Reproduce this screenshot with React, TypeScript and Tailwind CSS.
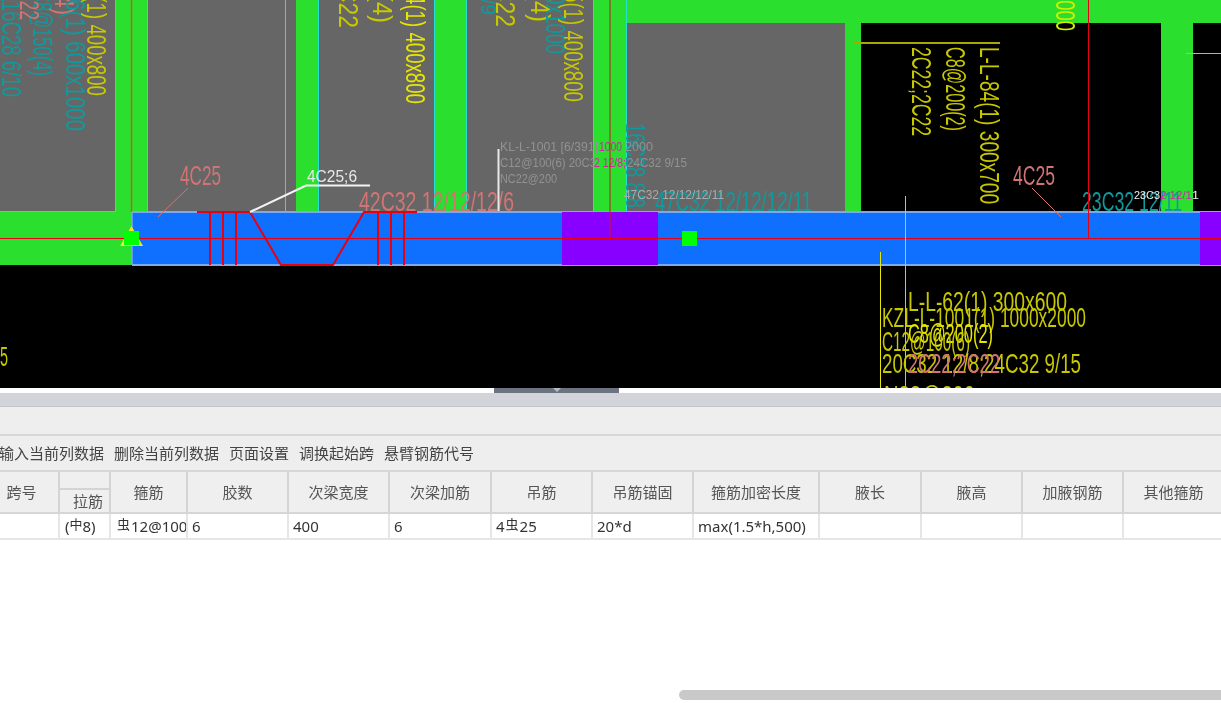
import React from "react";

const Y = "#c8c800";
const YB = "#e6e600";
const T = "#0f9a9e";
const P = "#d27474";
const M = "#d81fb0";
const G = "#929292";

type TProps = { x: number; y: number; len: number; size: number; fill: string; children: string; rot?: boolean };

// CAD annotation text. For rotated text, x is the baseline and y the top of the run.
function CadText({ x, y, len, size, fill, children, rot }: TProps) {
  return (
    <text
      x={x}
      y={y}
      fontSize={size}
      fill={fill}
      textLength={len}
      lengthAdjust="spacingAndGlyphs"
      transform={rot ? `rotate(90 ${x} ${y})` : undefined}
    >
      {children}
    </text>
  );
}

function Canvas() {
  const green = "#2adf2e";
  const gray = "#666666";
  const cyan = "#22e0d8";
  const red = "#e60012";
  return (
    <svg width="1221" height="388" viewBox="0 0 1221 388" className="block shrink-0 font-['Liberation_Sans']">
      <rect width="1221" height="388" fill="#000" />
      {/* Bays */}
      <rect x="0" y="0" width="116" height="212" fill={gray} />
      <rect x="116" y="0" width="32" height="212" fill={green} />
      <rect x="148" y="0" width="148" height="212" fill={gray} />
      <rect x="296" y="0" width="22" height="212" fill={green} />
      <rect x="318" y="0" width="116" height="212" fill={gray} />
      <rect x="434" y="0" width="33" height="212" fill={green} />
      <rect x="467" y="0" width="127" height="212" fill={gray} />
      <rect x="594" y="0" width="33" height="212" fill={green} />
      <rect x="627" y="0" width="594" height="23" fill={green} />
      <rect x="627" y="23" width="218" height="189" fill={gray} />
      <rect x="845" y="23" width="16" height="189" fill={green} />
      <rect x="1161" y="23" width="32" height="189" fill={green} />
      <rect x="0" y="212" width="132" height="53" fill={green} />
      {/* cyan edges */}
      {[115.5, 147.5, 285.5, 318.5, 434.5, 466.5, 593.5, 626.5].map((x) => (
        <line key={x} x1={x} y1="0" x2={x} y2="212" stroke={cyan} strokeWidth="1" />
      ))}
      <line x1="116" y1="211.5" x2="0" y2="211.5" stroke={cyan} strokeWidth="1" />
      <line x1="131.5" y1="0" x2="131.5" y2="212" stroke="#b5651d" strokeWidth="1.5" />

      {/* Texts over bays */}
      <CadText rot x={2} y={-8} len={105} size={27} fill={T}>{"116C28 6/10"}</CadText>
      <CadText rot x={33} y={-10} len={86} size={27} fill={T}>{"C8@150(4)"}</CadText>
      <CadText rot x={20} y={-22} len={42} size={27} fill={P}>{"2C22"}</CadText>
      <CadText rot x={55} y={-12} len={27} size={27} fill={P}>{"(4)"}</CadText>
      <CadText rot x={66} y={-12} len={143} size={27} fill={T}>{"76(1) 600x1000"}</CadText>
      <CadText rot x={87} y={-14} len={110} size={27} fill={Y}>{"4(1) 400x800"}</CadText>
      <CadText rot x={339} y={-14} len={42} size={27} fill={Y}>{"C22"}</CadText>
      <CadText rot x={373} y={-6} len={29} size={27} fill={Y}>{"(4)"}</CadText>
      <CadText rot x={406} y={-6} len={110} size={27} fill={YB}>{"4(1) 400x800"}</CadText>
      <CadText rot x={481} y={-25} len={40} size={22} fill={T}>{"C8/9"}</CadText>
      <CadText rot x={496} y={-15} len={42} size={27} fill={Y}>{"C22"}</CadText>
      <CadText rot x={531} y={-7} len={29} size={27} fill={Y}>{"(4)"}</CadText>
      <CadText rot x={546} y={-16} len={70} size={27} fill={T}>{"00x1000"}</CadText>
      <CadText rot x={564} y={-8} len={110} size={27} fill={Y}>{"5(1) 400x800"}</CadText>
      <CadText rot x={626} y={123} len={85} size={27} fill={T}>{"16C28 8/8"}</CadText>

      <CadText x={180} y={185} len={41} size={27} fill={P}>{"4C25"}</CadText>
      <CadText x={359} y={211} len={155} size={27} fill={P}>{"42C32 12/12/12/6"}</CadText>
      <CadText x={655} y={211} len={157} size={27} fill={T}>{"47C32 12/12/12/11"}</CadText>

      <line x1="498.5" y1="149" x2="498.5" y2="212" stroke="#e8e8e8" strokeWidth="2" />
      <CadText x={500} y={151} len={98} size={12} fill={G}>{"KL-L-1001 [6/391]"}</CadText>
      <CadText x={599} y={151} len={23} size={12} fill={M}>{"1000"}</CadText>
      <CadText x={625} y={151} len={28} size={12} fill={G}>{"2000"}</CadText>
      <CadText x={500} y={167} len={96} size={12} fill={G}>{"C12@100(6) 20C3"}</CadText>
      <CadText x={594} y={167} len={32} size={12} fill={M}>{"2 12/8;"}</CadText>
      <CadText x={627} y={167} len={60} size={12} fill={G}>{"24C32 9/15"}</CadText>
      <CadText x={500} y={183} len={57} size={12} fill={G}>{"NC22@200"}</CadText>
      <CadText x={624} y={199} len={100} size={12} fill="#acacac">{"47C32 12/12/12/11"}</CadText>

      {/* Right black bay */}
      <line x1="853" y1="43" x2="1000" y2="43" stroke="#a8a800" strokeWidth="2" />
      <CadText rot x={912} y={47} len={89} size={27} fill={Y}>{"2C22;2C22"}</CadText>
      <CadText rot x={946} y={47} len={84} size={27} fill={Y}>{"C8@200(2)"}</CadText>
      <CadText rot x={980} y={47} len={157} size={27} fill={Y}>{"L-L-84(1) 300x700"}</CadText>
      <CadText rot x={1056} y={-10} len={41} size={27} fill="#d0f000">{"1000"}</CadText>
      <line x1="1186" y1="53.5" x2="1221" y2="53.5" stroke={Y} strokeWidth="1" />
      <CadText x={1013} y={185} len={42} size={27} fill={P}>{"4C25"}</CadText>
      <CadText x={1082} y={211} len={100} size={27} fill={T}>{"23C32 12/11"}</CadText>
      <CadText x={1134} y={199} len={26} size={11} fill="#f0f0f0">{"23C3"}</CadText>
      <CadText x={1160} y={199} len={32} size={11} fill={M}>{"2 12/1"}</CadText>
      <CadText x={1192} y={199} len={7} size={11} fill="#f0f0f0">{"1"}</CadText>

      {/* Beam */}
      <rect x="132" y="212" width="1089" height="53" fill="#0f6fff" />
      <line x1="132" y1="212" x2="1221" y2="212" stroke="#7ba8f0" strokeWidth="2" />
      <line x1="132" y1="265" x2="1221" y2="265" stroke="#7ba8f0" strokeWidth="2" />
      <line x1="132" y1="212" x2="132" y2="265" stroke="#7ba8f0" strokeWidth="1.5" />
      <rect x="562" y="212" width="96" height="53" fill="#8800ff" />
      <rect x="1200" y="212" width="21" height="53" fill="#8800ff" />

      {/* Leaders crossing the beam */}
      <line x1="158" y1="217" x2="188" y2="188" stroke={P} strokeWidth="1" />
      <line x1="1032" y1="188" x2="1061" y2="217" stroke={P} strokeWidth="1" />

      {/* Axis lines */}
      <line x1="0" y1="238.5" x2="1221" y2="238.5" stroke={red} strokeWidth="1" />
      <line x1="610" y1="0" x2="610" y2="238" stroke="#d6141c" strokeWidth="1" />
      <line x1="1088.5" y1="0" x2="1088.5" y2="238" stroke={red} strokeWidth="1" />

      {/* Rebar */}
      <path d="M197 212H250L281 265H333L364 212H417" fill="none" stroke={red} strokeWidth="2" />
      {[210, 223, 236, 378, 391, 404].map((x) => (
        <line key={x} x1={x} y1="212" x2={x} y2="265" stroke={red} strokeWidth="2" />
      ))}
      <path d="M250 212L306 185.5H370" fill="none" stroke="#f4f4f4" strokeWidth="2" />
      <CadText x={307} y={182} len={50} size={16} fill="#e8e8e8">{"4C25;6"}</CadText>

      {/* Nodes */}
      <polygon points="131.5,226 120,246 143,246" fill="#f2e81a" />
      <rect x="124" y="231" width="15" height="14" fill="#00ff00" />
      <rect x="682" y="231" width="15" height="15" fill="#00ff00" />

      {/* Lower leaders and labels */}
      <line x1="905.5" y1="196" x2="905.5" y2="388" stroke="#d4d400" strokeWidth="1" />
      <line x1="880.5" y1="252" x2="880.5" y2="388" stroke={YB} strokeWidth="1" />
      <CadText x={908} y={311} len={159} size={28} fill={Y}>{"L-L-62(1) 300x600"}</CadText>
      <CadText x={882} y={327} len={204} size={28} fill={Y}>{"KZL-L-1001(1) 1000x2000"}</CadText>
      <CadText x={908} y={343} len={85} size={28} fill={YB}>{"C8@200(2)"}</CadText>
      <CadText x={882} y={351} len={88} size={28} fill={Y}>{"C12@100(6)"}</CadText>
      <CadText x={882} y={373} len={199} size={28} fill={Y}>{"20C32 12/8;24C32 9/15"}</CadText>
      <CadText x={908} y={373} len={92} size={28} fill={P}>{"2C22;2C22"}</CadText>
      <CadText x={884} y={405} len={91} size={28} fill={Y}>{"N22@200"}</CadText>
      <CadText x={0} y={366} len={8} size={28} fill={Y}>{"5"}</CadText>
    </svg>
  );
}

const columns: { w: string; head: string; cell: React.ReactNode }[] = [
  { w: "w-[101px]", head: "胶数", cell: "6" },
  { w: "w-[101px]", head: "次梁宽度", cell: "400" },
  { w: "w-[102px]", head: "次梁加筋", cell: "6" },
  {
    w: "w-[101px]",
    head: "吊筋",
    cell: (
      <>
        4<span className="relative -top-[2px] mx-[1px] text-[13px]">虫</span>25
      </>
    ),
  },
  { w: "w-[101px]", head: "吊筋锚固", cell: "20*d" },
  { w: "w-[126px]", head: "箍筋加密长度", cell: "max(1.5*h,500)" },
  { w: "w-[102px]", head: "腋长", cell: "" },
  { w: "w-[101px]", head: "腋高", cell: "" },
  { w: "w-[101px]", head: "加腋钢筋", cell: "" },
  { w: "w-[101px]", head: "其他箍筋", cell: "" },
];

const headCell = "flex shrink-0 items-center justify-center border-r-2 border-[#d4d4d4] pt-[1px] text-[15px] text-[#555]";
const bodyCell =
  "flex shrink-0 items-center overflow-hidden whitespace-nowrap border-r-2 border-[#e6e6e6] pt-[1px] text-[15px] text-[#333]";

function Grid() {
  return (
    <div className="font-['Noto_Sans','Noto_Sans_CJK_SC',sans-serif]">
      <div className="flex h-[44px] border-y-2 border-[#d6d6d6] bg-[#efefef]">
        <div className={`${headCell} w-[60px] pr-[15px]`}>跨号</div>
        <div className="flex w-[51px] shrink-0 flex-col border-r-2 border-[#d4d4d4]">
          <div className="h-[21px] border-b-2 border-[#d4d4d4]" />
          <div className="flex flex-1 items-center justify-end pr-[6px] text-[15px] text-[#555]">拉筋</div>
        </div>
        <div className={`${headCell} w-[77px]`}>箍筋</div>
        {columns.map((c) => (
          <div key={c.head} className={`${headCell} ${c.w}`}>
            {c.head}
          </div>
        ))}
      </div>
      <div className="flex h-[26px] border-b-2 border-[#e6e6e6] bg-white">
        <div className={`${bodyCell} w-[60px]`} />
        <div className={`${bodyCell} w-[51px] pl-[5px]`}>
          (<span className="relative -top-[2px] text-[13px]">中</span>8)
        </div>
        <div className={`${bodyCell} w-[77px] pl-[6px]`}>
          <span className="relative -top-[2px] mr-[1px] text-[13px]">虫</span>12@100(6)
        </div>
        {columns.map((c) => (
          <div key={c.head} className={`${bodyCell} ${c.w} pl-[4px]`}>
            {c.cell}
          </div>
        ))}
      </div>
    </div>
  );
}

export default function App() {
  return (
    <div className="flex h-[703px] w-[1221px] flex-col overflow-hidden bg-white blur-[0.4px]">
      <Canvas />
      <div className="flex h-[5px] shrink-0 bg-white">
        <div className="ml-[494px] flex h-[5px] w-[125px] justify-center bg-[#6b7480]">
          <div className="h-0 w-0 border-x-[4px] border-t-[4px] border-x-transparent border-t-[#b8bcc2]" />
        </div>
      </div>
      <div className="h-[14px] shrink-0 border-b border-[#c4c5c9] bg-[#d3d4d9]" />
      <div className="h-[29px] shrink-0 border-b-2 border-[#d8d8d8] bg-[#eeeeee]" />
      <div className="flex h-[34px] shrink-0 items-center gap-[10px] bg-[#eeeeee] font-['Noto_Sans_CJK_SC',sans-serif] text-[15px] text-[#444]">
        <span className="ml-[-1px]">输入当前列数据</span>
        <span>删除当前列数据</span>
        <span>页面设置</span>
        <span>调换起始跨</span>
        <span>悬臂钢筋代号</span>
      </div>
      <Grid />
      <div className="flex flex-1 flex-col justify-end pb-[3px]">
        <div className="ml-[679px] h-[10px] rounded-l-[5px] bg-[#c9c9c9]" />
      </div>
    </div>
  );
}
